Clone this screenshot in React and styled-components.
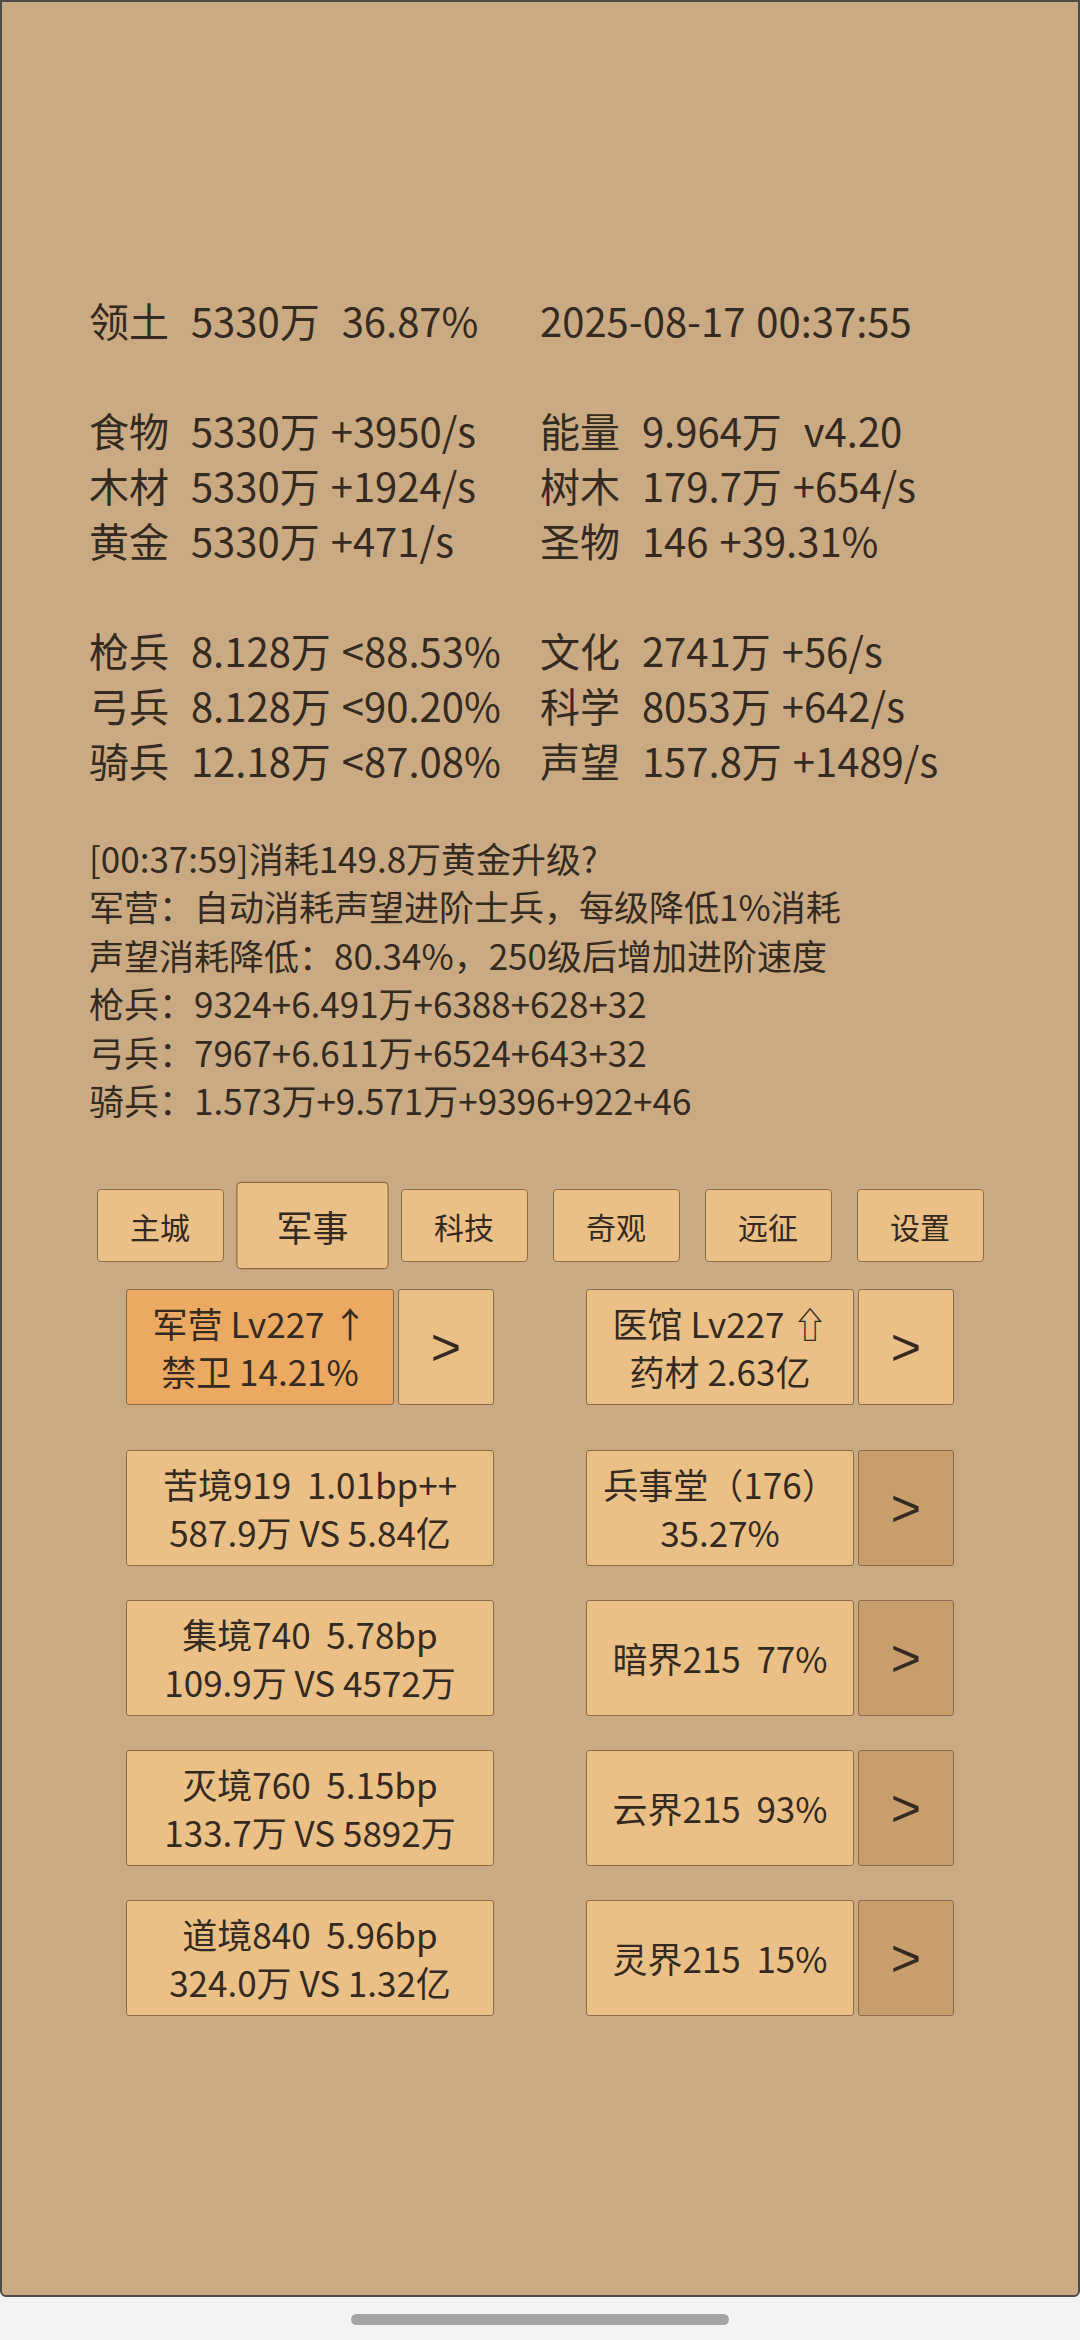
import React from 'react'
import styled, { createGlobalStyle } from 'styled-components'

const GlobalStyle = createGlobalStyle`
  html, body {
    margin: 0;
    padding: 0;
    background: #f2f3f5;
  }
  body {
    font-family: "Noto Sans CJK SC", "Noto Sans", "DejaVu Sans", sans-serif;
    color: #342a21;
  }
`

const Screen = styled.div`
  width: 1080px;
  height: 2340px;
  display: flex;
  flex-direction: column;
  align-items: stretch;
`

const Panel = styled.div`
  box-sizing: border-box;
  height: 2297px;
  background: #caaa82;
  border: 2px solid #4d4b48;
  border-radius: 0 0 6px 6px;
  padding-top: 291px;
  display: flex;
  flex-direction: column;
`

const StatsGrid = styled.div`
  display: grid;
  grid-template-columns: 451px auto;
  padding-left: 87px;
  font-size: 40px;
  line-height: 55px;
  white-space: pre;
  word-spacing: 2px;
`

const StatCell = styled.div`
  height: 55px;
`

const LogBlock = styled.div`
  margin-top: 46px;
  padding-left: 87px;
  font-size: 35px;
  line-height: 48.4px;
  white-space: pre;
`

const TabRow = styled.div`
  margin-top: 65px;
  display: flex;
  justify-content: center;
  gap: 25px;
`

const Tab = styled.div`
  box-sizing: border-box;
  width: 127px;
  height: 73px;
  display: flex;
  align-items: center;
  justify-content: center;
  background: #ebc086;
  border: 1.5px solid #8a6a48;
  border-radius: 4px;
  font-size: 30px;
  transform: ${(props) => (props.active ? 'scale(1.2)' : 'none')};
`

const CardGrid = styled.div`
  margin-top: 27px;
  display: grid;
  grid-template-columns: 368px 368px;
  column-gap: 92px;
  row-gap: 34px;
  justify-content: center;
`

const CardSlot = styled.div`
  display: flex;
  gap: 4px;
  height: 116px;
  margin-bottom: ${(props) => (props.first ? '11px' : '0')};
`

const Card = styled.div`
  box-sizing: border-box;
  flex: 1;
  display: flex;
  flex-direction: column;
  align-items: center;
  justify-content: center;
  background: ${(props) => (props.highlight ? '#eca962' : '#ebc086')};
  border: 1.5px solid #8a6a48;
  border-radius: 3px;
  font-size: 35px;
  line-height: 48px;
  white-space: pre;
  text-align: center;
`

const ArrowButton = styled.div`
  box-sizing: border-box;
  width: 96px;
  display: flex;
  align-items: center;
  justify-content: center;
  background: ${(props) => (props.dim ? '#c89e6c' : '#ebc086')};
  border: 1.5px solid #8a6a48;
  border-radius: 3px;
  font-family: "Liberation Sans", Arial, sans-serif;
  font-size: 52px;
`

const BottomBar = styled.div`
  flex: 1;
  display: flex;
  justify-content: center;
  padding-top: 17px;
`

const HomeIndicator = styled.div`
  width: 378px;
  height: 11px;
  border-radius: 6px;
  background: #a5a5a7;
`

const stats = [
  ['领土  5330万  36.87%', '2025-08-17 00:37:55'],
  ['', ''],
  ['食物  5330万 +3950/s', '能量  9.964万  v4.20'],
  ['木材  5330万 +1924/s', '树木  179.7万 +654/s'],
  ['黄金  5330万 +471/s', '圣物  146 +39.31%'],
  ['', ''],
  ['枪兵  8.128万 <88.53%', '文化  2741万 +56/s'],
  ['弓兵  8.128万 <90.20%', '科学  8053万 +642/s'],
  ['骑兵  12.18万 <87.08%', '声望  157.8万 +1489/s'],
]

const logLines = [
  '[00:37:59]消耗149.8万黄金升级?',
  '军营：自动消耗声望进阶士兵，每级降低1%消耗',
  '声望消耗降低：80.34%，250级后增加进阶速度',
  '枪兵：9324+6.491万+6388+628+32',
  '弓兵：7967+6.611万+6524+643+32',
  '骑兵：1.573万+9.571万+9396+922+46',
]

const tabs = ['主城', '军事', '科技', '奇观', '远征', '设置']

const cards = [
  { lines: ['军营 Lv227 ↑', '禁卫 14.21%'], highlight: true, arrow: 'light' },
  { lines: ['医馆 Lv227 ⇧', '药材 2.63亿'], arrow: 'light' },
  { lines: ['苦境919  1.01bp++', '587.9万 VS 5.84亿'] },
  { lines: ['兵事堂（176）', '35.27%'], arrow: 'dim' },
  { lines: ['集境740  5.78bp', '109.9万 VS 4572万'] },
  { lines: ['暗界215  77%'], arrow: 'dim' },
  { lines: ['灭境760  5.15bp', '133.7万 VS 5892万'] },
  { lines: ['云界215  93%'], arrow: 'dim' },
  { lines: ['道境840  5.96bp', '324.0万 VS 1.32亿'] },
  { lines: ['灵界215  15%'], arrow: 'dim' },
]

function App() {
  return (
    <Screen>
      <GlobalStyle />
      <Panel>
        <StatsGrid>
          {stats.map((row, i) => (
            <React.Fragment key={i}>
              <StatCell>{row[0]}</StatCell>
              <StatCell>{row[1]}</StatCell>
            </React.Fragment>
          ))}
        </StatsGrid>
        <LogBlock>
          {logLines.map((line) => (
            <div key={line}>{line}</div>
          ))}
        </LogBlock>
        <TabRow>
          {tabs.map((t) => (
            <Tab key={t} active={t === '军事'}>
              {t}
            </Tab>
          ))}
        </TabRow>
        <CardGrid>
          {cards.map((c, i) => (
            <CardSlot key={i} first={i < 2}>
              <Card highlight={c.highlight}>
                {c.lines.map((l) => (
                  <div key={l}>{l}</div>
                ))}
              </Card>
              {c.arrow && <ArrowButton dim={c.arrow === 'dim'}>&gt;</ArrowButton>}
            </CardSlot>
          ))}
        </CardGrid>
      </Panel>
      <BottomBar>
        <HomeIndicator />
      </BottomBar>
    </Screen>
  )
}

export default App
